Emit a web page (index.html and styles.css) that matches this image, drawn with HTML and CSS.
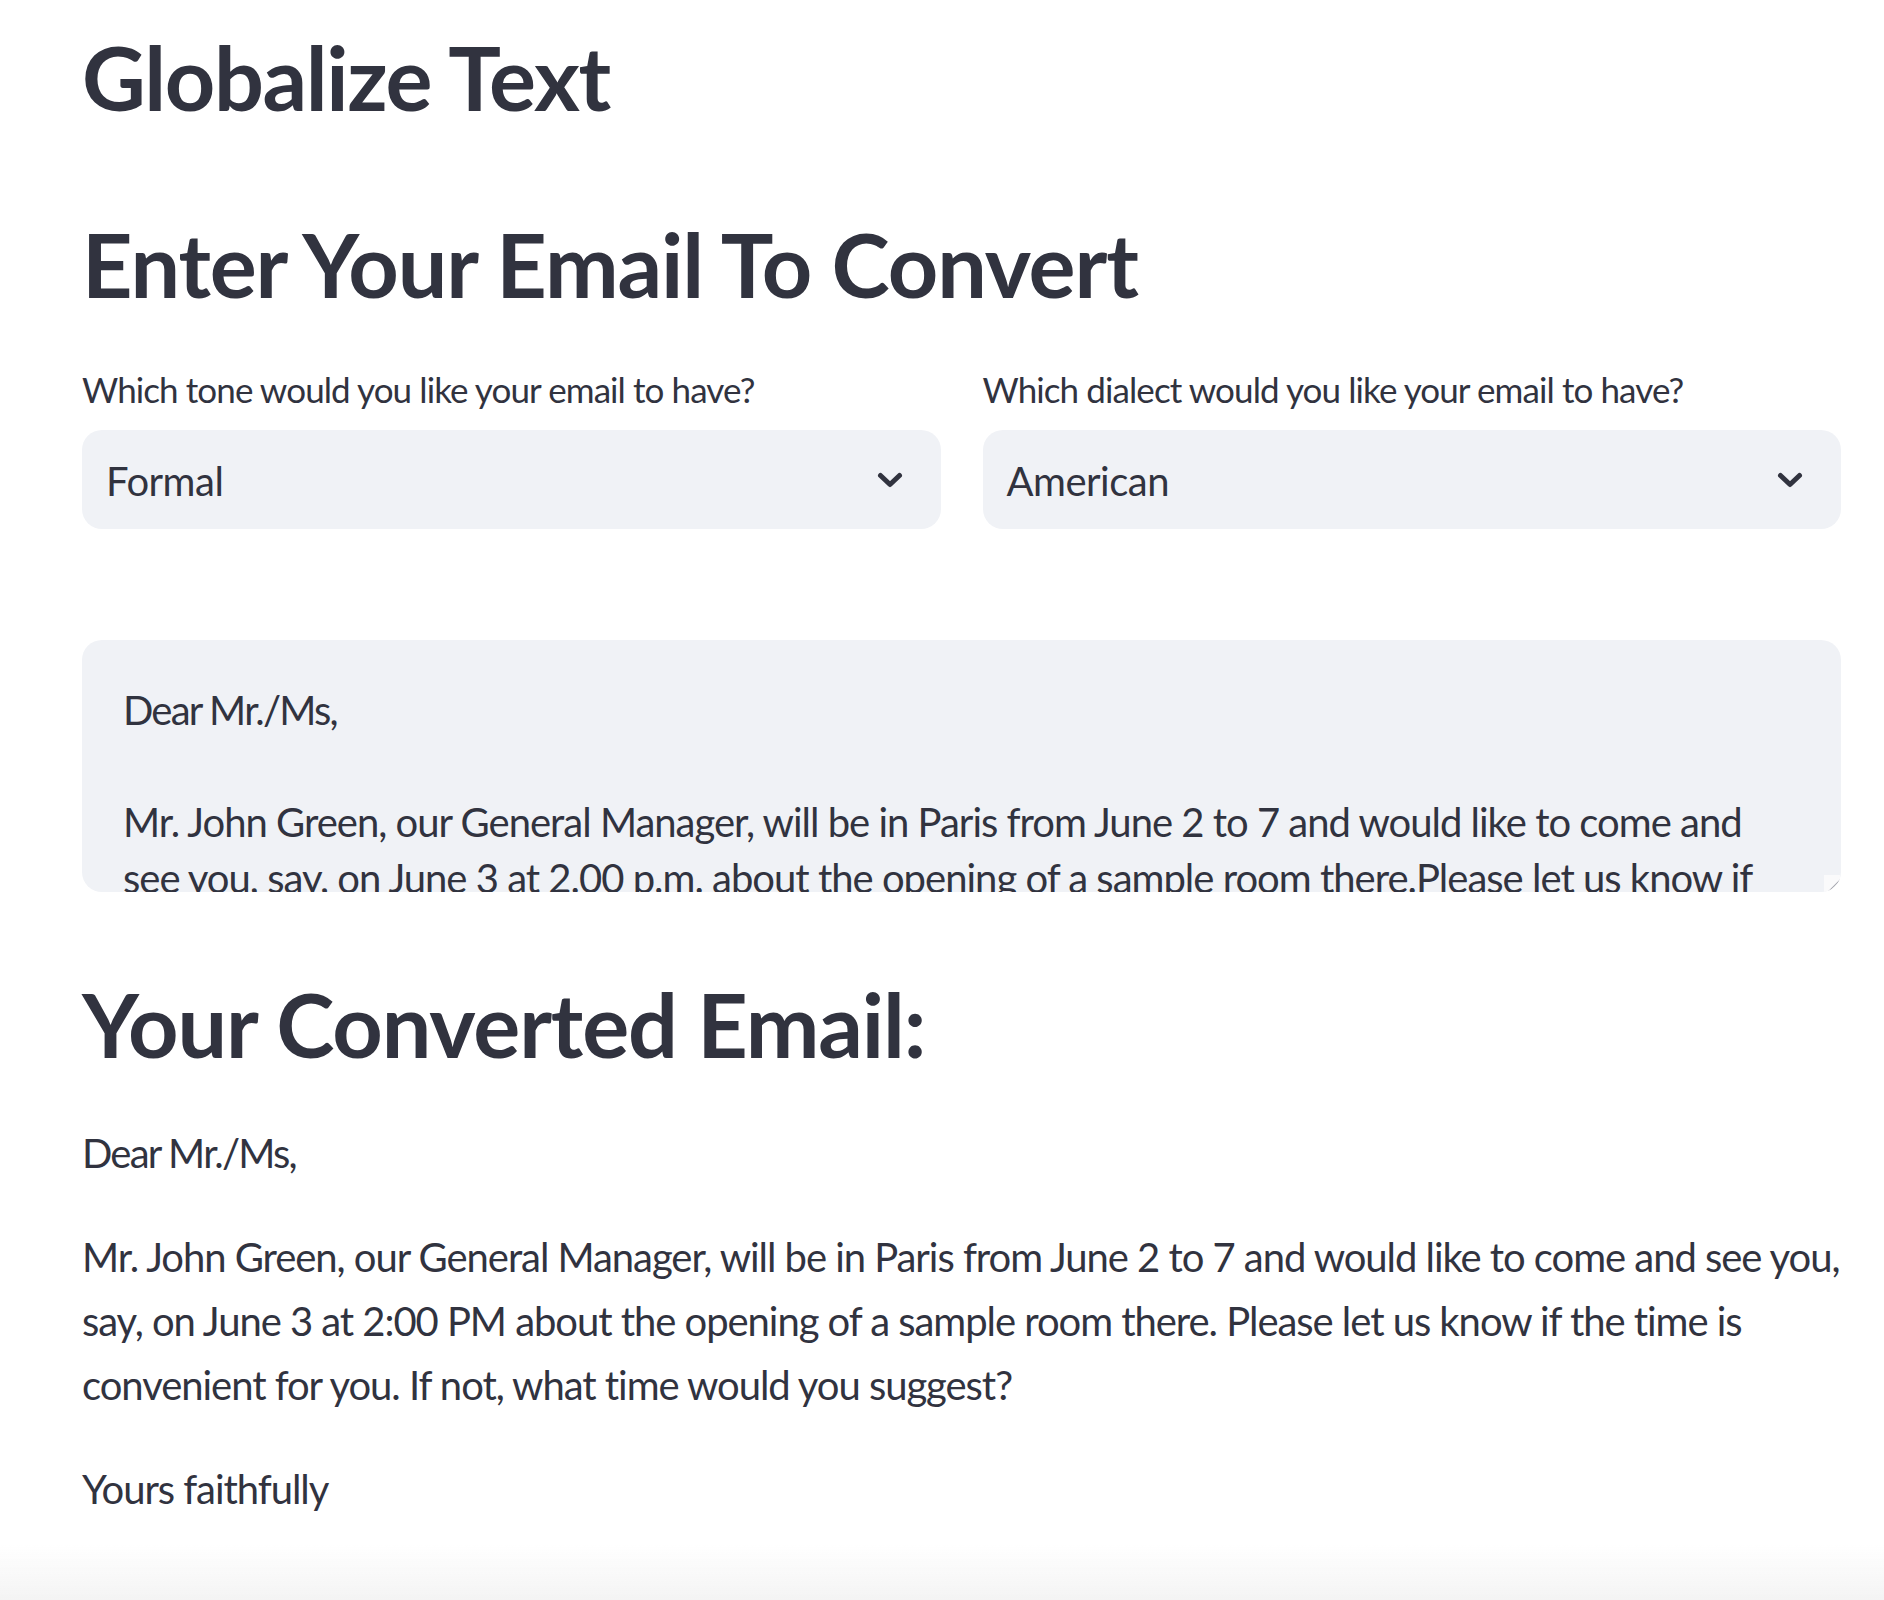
FILE: index.html
```html
<!DOCTYPE html>
<html lang="en">
<head>
<meta charset="utf-8">
<title>Globalize Text</title>
<link rel="stylesheet" href="styles.css">
</head>
<body>
<main class="block">
  <h1 class="title">Globalize Text</h1>
  <h1 class="heading heading-enter">Enter Your Email To Convert</h1>

  <div class="row">
    <div class="col">
      <label class="label">Which tone would you like your email to have?</label>
      <div class="select">
        <span class="select-value">Formal</span>
        <svg class="chevron" width="26" height="16" viewBox="0 0 26 16" aria-hidden="true"><polyline points="3.5,3.5 13,12.5 22.5,3.5" fill="none" stroke="#31333F" stroke-width="5" stroke-linecap="round" stroke-linejoin="round"/></svg>
      </div>
    </div>
    <div class="col">
      <label class="label">Which dialect would you like your email to have?</label>
      <div class="select">
        <span class="select-value">American</span>
        <svg class="chevron" width="26" height="16" viewBox="0 0 26 16" aria-hidden="true"><polyline points="3.5,3.5 13,12.5 22.5,3.5" fill="none" stroke="#31333F" stroke-width="5" stroke-linecap="round" stroke-linejoin="round"/></svg>
      </div>
    </div>
  </div>

  <div class="textarea" role="textbox" aria-multiline="true">
    <div class="ta-line salutation">Dear Mr./Ms,</div>
    <div class="ta-line">&nbsp;</div>
    <div class="ta-line">Mr. John Green, our General Manager, will be in Paris from June 2 to 7 and would like to come and</div>
    <div class="ta-line">see you, say, on June 3 at 2.00 p.m. about the opening of a sample room there.Please let us know if</div>
    <span class="resize-handle"></span>
  </div>

  <h1 class="heading heading-result">Your Converted Email:</h1>

  <div class="markdown">
    <p class="salutation">Dear Mr./Ms,</p>
    <p>Mr. John Green, our General Manager, will be in Paris from June 2 to 7 and would like to come and see you,<br>say, on June 3 at 2:00 PM about the opening of a sample room there. Please let us know if the time is<br>convenient for you. If not, what time would you suggest?</p>
    <p>Yours faithfully</p>
  </div>
</main>
<div class="bottom-fade"></div>
</body>
</html>
```
FILE: styles.css
```css
html, body {
  margin: 0;
  padding: 0;
  background: #ffffff;
}

body {
  font-family: "Lato", "Liberation Sans", sans-serif;
  color: #31333F;
  width: 1884px;
  min-height: 1600px;
}

.block {
  padding: 27px 43px 0 82px;
  width: 1759px;
}

.title,
.heading {
  margin: 0;
  font-size: 88px;
  line-height: 100px;
  font-weight: 700;
  letter-spacing: -1.1px;
  color: #31333F;
}

.title {
  letter-spacing: -1.4px;
}

.heading-enter {
  margin-top: 87px;
}

.row {
  display: flex;
  gap: 42px;
  margin-top: 51px;
}

.col {
  flex: 1 1 0;
  display: flex;
  flex-direction: column;
}

.label {
  font-size: 35px;
  line-height: 48px;
  letter-spacing: -0.9px;
  margin-bottom: 17px;
}

.select {
  height: 99px;
  background: #F0F2F6;
  border-radius: 20px;
  display: flex;
  align-items: center;
  justify-content: space-between;
  padding: 0 38px 0 24px;
  box-sizing: border-box;
}

.select-value {
  font-size: 40px;
  line-height: 48px;
  letter-spacing: -0.5px;
  padding-top: 2px;
}

.chevron {
  display: block;
}

.textarea {
  position: relative;
  margin-top: 111px;
  height: 252px;
  box-sizing: border-box;
  background: #F0F2F6;
  border-radius: 20px;
  padding: 42px 40px 0 41px;
  overflow: hidden;
}

.ta-line {
  font-size: 40px;
  line-height: 56px;
  letter-spacing: -1px;
  white-space: pre;
}

.resize-handle {
  position: absolute;
  right: 1px;
  bottom: 0;
  width: 16px;
  height: 17px;
  background: linear-gradient(135deg, #fafafb 0%, #fafafb 60%, #a0a2aa 63%, #fafafb 68%, #fafafb 100%);
}

.heading-result {
  margin-top: 82px;
}

.markdown {
  margin-top: 47px;
}

.markdown p {
  margin: 0 0 40px 0;
  font-size: 40px;
  line-height: 64px;
  letter-spacing: -1.05px;
  white-space: nowrap;
}

.textarea .salutation,
.markdown .salutation {
  letter-spacing: -1.8px;
}

.bottom-fade {
  position: fixed;
  left: 0;
  right: 0;
  bottom: 0;
  height: 56px;
  background: linear-gradient(to bottom, rgba(246, 246, 246, 0) 0%, #f4f4f4 100%);
  pointer-events: none;
}
```
